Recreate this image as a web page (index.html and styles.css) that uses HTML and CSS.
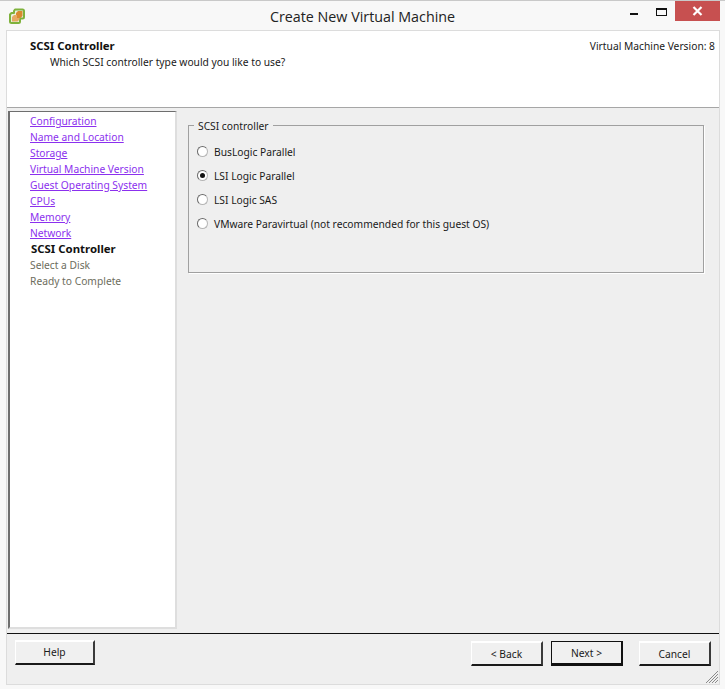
FILE: index.html
```html
<!DOCTYPE html>
<html lang="en">
<head>
<meta charset="utf-8">
<title>Create New Virtual Machine</title>
<link rel="stylesheet" href="styles.css">
</head>
<body>
<div class="window">
  <div class="titlebar">
    <svg class="app-icon" width="18" height="18" viewBox="0 0 18 18">
      <path d="M7 2.500h7.500a1.500 1.500 0 0 1 1.500 1.500v6a1.500 1.500 0 0 1-1.500 1.500h-2.500v3a1.500 1.500 0 0 1-1.500 1.500h-7a1.500 1.500 0 0 1-1.500-1.500v-7l1.500-1.500h2.500v-2z" fill="#e9f0dc" stroke="#7fb23c" stroke-width="2" stroke-linejoin="round"/>
      <path d="M8 6l2-2h4.500v5l-2 2h-4.500z" fill="#d98a2e"/>
      <path d="M4 10l2-2h3v3h2.500v1.500l-2 2h-5.500z" fill="#e6aa62"/>
    </svg>
    <div class="title">Create New Virtual Machine</div>
    <div class="controls">
      <span class="min"></span>
      <span class="max"></span>
      <span class="close">
        <svg width="11" height="10" viewBox="0 0 11 10"><path d="M1.500 1l8 8M9.500 1l-8 8" stroke="#fff" stroke-width="2.200"/></svg>
      </span>
    </div>
  </div>
  <div class="client">
    <header class="header">
      <div>
        <div class="h-title">SCSI Controller</div>
        <div class="h-sub">Which SCSI controller type would you like to use?</div>
      </div>
      <div class="version">Virtual Machine Version: 8</div>
    </header>
    <div class="main">
      <nav class="nav">
        <a class="link">Configuration</a>
        <a class="link">Name and Location</a>
        <a class="link">Storage</a>
        <a class="link">Virtual Machine Version</a>
        <a class="link">Guest Operating System</a>
        <a class="link">CPUs</a>
        <a class="link">Memory</a>
        <a class="link">Network</a>
        <span class="current">SCSI Controller</span>
        <span class="todo">Select a Disk</span>
        <span class="todo">Ready to Complete</span>
      </nav>
      <div class="content">
        <section class="group">
          <div class="legend">SCSI controller</div>
          <label class="opt"><span class="radio"></span>BusLogic Parallel</label>
          <label class="opt"><span class="radio on"></span>LSI Logic Parallel</label>
          <label class="opt"><span class="radio"></span>LSI Logic SAS</label>
          <label class="opt"><span class="radio"></span>VMware Paravirtual (not recommended for this guest OS)</label>
        </section>
      </div>
    </div>
    <footer class="footer">
      <button class="btn help">Help</button>
      <div class="spacer"></div>
      <button class="btn">&lt; Back</button>
      <button class="btn default">Next &gt;</button>
      <button class="btn cancel">Cancel</button>
      <svg class="grip" width="14" height="14" viewBox="0 0 14 14"><path d="M13 1L1 13M13 4L4 13M13 7L7 13M13 10L10 13" stroke="#8a8a8a" stroke-width="1"/></svg>
    </footer>
  </div>
</div>
</body>
</html>
```
FILE: styles.css
```css
html, body { margin: 0; padding: 0; }
body { width: 725px; height: 689px; overflow: hidden; font-family: "Noto Sans", "Open Sans", sans-serif; font-size: 10.25px; color: #1a1a1a; }
.window { box-sizing: border-box; width: 725px; height: 689px; background: #f8f8f8; border-top: 1px solid #c9c9c9; display: flex; flex-direction: column; }
.titlebar { height: 29px; flex: none; display: flex; align-items: flex-start; position: relative; }
.app-icon { margin: 6px 0 0 8px; }
.title { position: absolute; left: 0; right: 0; top: 6px; text-align: center; font-family: "Open Sans", sans-serif; font-size: 14.3px; line-height: 19px; color: #222; }
.controls { margin-left: auto; margin-right: 5px; display: flex; align-items: flex-start; }
.min { width: 8px; height: 2px; background: #111; margin: 12px 0 0 0; }
.max { box-sizing: border-box; width: 11px; height: 8px; border: 1px solid #111; border-top-width: 2px; margin: 7px 0 0 18px; }
.close { width: 45px; height: 20px; background: #c75050; margin-left: 8px; display: flex; align-items: center; justify-content: center; }
.client { flex: 1; margin: 0 5px 4px 6px; border: 1px solid #dcdcdc; background: #efefef; display: flex; flex-direction: column; min-height: 0; }
.header { height: 76px; flex: none; background: #fff; border-bottom: 1px solid #a6a6a6; display: flex; justify-content: space-between; padding: 0 4px 0 23px; }
.h-title { font-weight: 700; font-size: 11.4px; margin-top: 7px; line-height: 16px; color: #111; }
.h-sub { margin: 0 0 0 20px; line-height: 16px; }
.version { margin-top: 7px; line-height: 16px; }
.main { flex: 1; display: flex; min-height: 0; padding: 3px 0 0 1px; }
.nav { box-sizing: border-box; width: 169px; height: 518px; background: #fff; border: 2px solid #dedede; border-left-color: #6e6e6e; border-top-color: #6e6e6e; border-top-width: 1px; padding: 1px 0 0 20px; display: flex; flex-direction: column; align-items: flex-start; }
.nav > * { line-height: 16px; }
.link { color: #8b30ee; text-decoration: underline; }
.current { font-weight: 700; font-size: 11.4px; color: #111; margin-left: 1px; }
.todo { color: #6d6d5d; }
.content { flex: 1; padding: 14px 15px 0 11px; }
.group { box-sizing: border-box; height: 148px; border: 1px solid #a0a0a0; box-shadow: 1px 1px 0 #fff; position: relative; padding: 14px 0 0 8px; }
.legend { position: absolute; left: 5px; top: -7px; background: #efefef; padding: 0 4px; line-height: 14px; }
.opt { display: flex; align-items: center; height: 24px; }
.radio { box-sizing: border-box; width: 11px; height: 11px; border-radius: 50%; background: #fff; border: 1px solid #b5b5b5; border-top-color: #6a6a6a; border-left-color: #6a6a6a; margin-right: 6px; position: relative; top: -1px; }
.radio.on::after { content: ""; position: absolute; left: 2px; top: 2px; width: 5px; height: 5px; border-radius: 50%; background: #111; }
.footer { flex: none; height: 51px; border-top: 1px solid #111; margin-top: 3px; display: flex; align-items: flex-start; padding: 6px 8px 0 8px; position: relative; box-sizing: border-box; }
.btn { box-sizing: border-box; width: 72px; height: 25px; margin-top: 1px; padding: 0; background: #f0f0f0; font: inherit; color: #1a1a1a; border: solid; border-color: #fff #3a3a3a #1a1a1a #fff; border-width: 2px 2px 2px 1px; }
.help { width: 80px; margin-top: 0; padding-bottom: 1px; }
.spacer { flex: 1; }
.default { margin-left: 8px; border-color: #111; border-width: 1px 2px 3px 1px; }
.cancel { margin-left: 16px; }
.grip { position: absolute; right: 0; bottom: 0; }
```
